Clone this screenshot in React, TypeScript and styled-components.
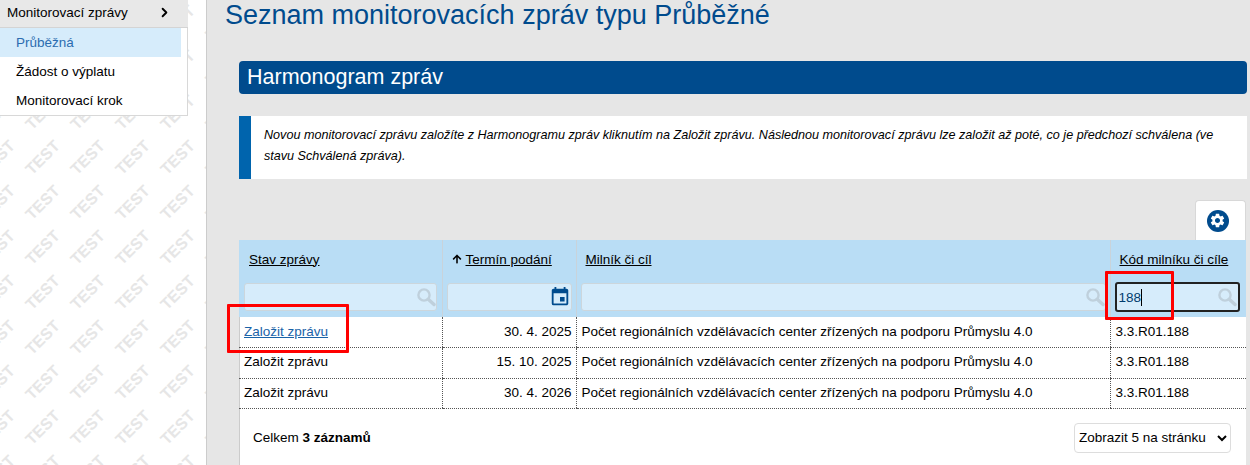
import styled, { createGlobalStyle } from 'styled-components';
import { ChevronRight } from 'lucide-react';
import { FaArrowUp } from 'react-icons/fa';
import { MdEvent, MdSettings } from 'react-icons/md';

const GlobalStyle = createGlobalStyle`
  html, body {
    margin: 0;
    padding: 0;
    height: 465px;
    overflow: hidden;
    background: #e6e6e6;
    font-family: "Liberation Sans", Arial, sans-serif;
    font-size: 13.5px;
    color: #000;
  }
  * { box-sizing: border-box; }
`;

const Page = styled.div`
  display: flex;
  width: 1250px;
  height: 465px;
  overflow: hidden;
`;

const Sidebar = styled.aside`
  position: relative;
  flex: 0 0 207px;
  height: 465px;
  background: #fff;
  border-right: 1px solid #ccc;
  overflow: hidden;
`;

const Watermark = styled.div`
  position: absolute;
  top: 0;
  left: -25px;
  display: grid;
  grid-template-columns: repeat(6, 45px);
  grid-auto-rows: 45px;
`;

const Stamp = styled.span`
  display: flex;
  align-items: center;
  justify-content: center;
  font-size: 16px;
  font-weight: 700;
  color: #e6e6e6;
  transform: rotate(-45deg);
`;

const Menu = styled.nav`
  position: relative;
  width: 188px;
`;

const MenuHead = styled.div`
  display: flex;
  align-items: center;
  justify-content: space-between;
  height: 28px;
  padding: 0 16px 2px 7px;
  background: #e8e8e8;
  border-bottom: 1px solid #d4d4d4;
`;

const MenuList = styled.div`
  background: #fff;
  border-right: 1px solid #d8d8d8;
  border-bottom: 1px solid #d8d8d8;
  height: 88px;
`;

const MenuItem = styled.div<{ $active?: boolean }>`
  display: flex;
  align-items: center;
  width: 181px;
  height: 29px;
  padding-left: 16px;
  background: ${({ $active }) => ($active ? '#d6ecfb' : 'transparent')};
  color: ${({ $active }) => ($active ? '#2b6cb0' : '#000')};
`;

const Main = styled.main`
  flex: 1;
  min-width: 0;
  padding: 0 3px 0 18px;
`;

const Title = styled.h1`
  margin: 0;
  height: 61px;
  font-size: 27px;
  line-height: 30px;
  font-weight: 400;
  color: #004b8d;
`;

const Section = styled.section`
  margin-left: 14px;
`;

const Banner = styled.h2`
  margin: 0;
  height: 33px;
  padding-left: 8px;
  border-radius: 4px;
  background: #004b8d;
  color: #fff;
  font-size: 21.5px;
  line-height: 33px;
  font-weight: 400;
`;

const Note = styled.p`
  margin: 22px 0 0;
  height: 63px;
  padding: 9px 20px 0 13px;
  border-left: 12px solid #0064ad;
  background: #fff;
  font-size: 12.6px;
  line-height: 21px;
  font-style: italic;
`;

const TabRow = styled.div`
  display: flex;
  justify-content: flex-end;
  height: 40px;
  margin: 21px 1px 0 0;
`;

const SettingsTab = styled.div`
  display: flex;
  align-items: center;
  justify-content: center;
  width: 51px;
  height: 40px;
  padding-right: 6px;
  background: #fff;
  border: 1px solid #d8d8d8;
  border-bottom: 0;
  border-radius: 4px 4px 0 0;
`;

const GearBadge = styled.span`
  display: flex;
  align-items: center;
  justify-content: center;
  width: 22px;
  height: 22px;
  border-radius: 50%;
  background: #004b8d;
  color: #fff;
  font-size: 17px;
`;

const TableWrap = styled.div`
  position: relative;
  margin-right: 1px;
  background: #fff;
  box-shadow: inset 1px 0 #ccc;
`;

const Table = styled.table`
  width: 100%;
  table-layout: fixed;
  border-collapse: collapse;
`;

const HeadCell = styled.th`
  height: 40px;
  padding: 0 0 2px 9px;
  background: #b9ddf5;
  border-left: 1px solid #c9d3da;
  text-align: left;
  font-weight: 400;
  font-size: 13.5px;
  vertical-align: middle;

  &:first-child { border-left: 0; padding-left: 10px; }
`;

const SortLink = styled.a`
  color: #000;
  text-decoration: underline;
`;

const SortArrow = styled.span`
  display: inline-block;
  margin-right: 4px;
  font-size: 10px;
`;

const FilterCell = styled.td`
  height: 37px;
  padding: 3px 4px 6px 4px;
  background: #b9ddf5;
  border-left: 1px solid #c9d3da;
  vertical-align: top;

  &:first-child { border-left: 0; padding: 3px 5px 6px 5px; }
`;

const FilterBox = styled.div<{ $focused?: boolean }>`
  display: flex;
  align-items: center;
  justify-content: space-between;
  height: ${({ $focused }) => ($focused ? '30px' : '28px')};
  margin: ${({ $focused }) => ($focused ? '-1px 2px -1px 0' : '0')};
  padding: 0 ${({ $focused }) => ($focused ? '1px' : '0')} 0 2px;
  border: ${({ $focused }) => ($focused ? '2px solid #222' : '1px solid #ccd6dc')};
  border-radius: 3px;
  background: #d6ecfb;
  color: #004b8d;
  font-size: 22px;
`;

const FilterValue = styled.span`
  height: 17px;
  font-size: 13.5px;
  line-height: 17px;
  color: #003c6e;
  border-right: 1px solid #000;
`;

const Spacer = styled.span``;

const Row = styled.tr`
  height: 30.5px;
`;

const Cell = styled.td<{ $align?: string }>`
  padding: 0 4px 2px 5px;
  border-bottom: 1px dotted #555;
  border-left: 1px dotted #555;
  font-size: 13.5px;
  white-space: nowrap;
  overflow: hidden;
  text-align: ${({ $align }) => $align || 'left'};

  &:first-child { border-left: 0; }
`;

const CreateLink = styled.a`
  color: #1a63a8;
  text-decoration: underline;
`;

const TableFooter = styled.div`
  display: flex;
  align-items: center;
  justify-content: space-between;
  height: 58px;
  padding: 0 15px 1px 14px;
`;

const PageSize = styled.select`
  width: 157px;
  height: 30px;
  padding: 0;
  border: 1px solid #ddd;
  border-radius: 4px;
  background: #fff;
  color: #000;
  font-family: inherit;
  font-size: 13.5px;
`;

const Highlight = styled.div<{ $left: number; $top: number; $width: number }>`
  position: absolute;
  left: ${({ $left }) => $left}px;
  top: ${({ $top }) => $top}px;
  width: ${({ $width }) => $width}px;
  height: 49px;
  border: 3px solid #f00;
  border-radius: 1px;
  pointer-events: none;
`;

function SearchIcon() {
  return (
    <svg width="20" height="20" viewBox="0 0 20 20" fill="none" stroke="#bfd0dc" aria-hidden="true">
      <circle cx="8" cy="8" r="5.6" strokeWidth="2.4" />
      <path d="M12.5 12.5 L18 17.5" strokeWidth="3.4" strokeLinecap="round" />
    </svg>
  );
}

const rows = [
  { date: '30. 4. 2025', link: true },
  { date: '15. 10. 2025', link: false },
  { date: '30. 4. 2026', link: false },
];

export default function App() {
  return (
    <>
      <GlobalStyle />
      <Page>
        <Sidebar>
          <Watermark aria-hidden="true">
            {Array.from({ length: 66 }, (_, i) => (
              <Stamp key={i}>TEST</Stamp>
            ))}
          </Watermark>
          <Menu>
            <MenuHead>
              Monitorovací zprávy
              <ChevronRight size={15} strokeWidth={3} />
            </MenuHead>
            <MenuList>
              <MenuItem $active>Průběžná</MenuItem>
              <MenuItem>Žádost o výplatu</MenuItem>
              <MenuItem>Monitorovací krok</MenuItem>
            </MenuList>
          </Menu>
        </Sidebar>
        <Main>
          <Title>Seznam monitorovacích zpráv typu Průběžné</Title>
          <Section>
            <Banner>Harmonogram zpráv</Banner>
            <Note>
              Novou monitorovací zprávu založíte z Harmonogramu zpráv kliknutím na Založit zprávu. Následnou
              monitorovací zprávu lze založit až poté, co je předchozí schválena (ve stavu Schválená zpráva).
            </Note>
            <TabRow>
              <SettingsTab>
                <GearBadge>
                  <MdSettings />
                </GearBadge>
              </SettingsTab>
            </TabRow>
            <TableWrap>
              <Table>
                <colgroup>
                  <col style={{ width: 203 }} />
                  <col style={{ width: 134 }} />
                  <col style={{ width: 534 }} />
                  <col />
                </colgroup>
                <thead>
                  <tr>
                    <HeadCell>
                      <SortLink>Stav zprávy</SortLink>
                    </HeadCell>
                    <HeadCell>
                      <SortArrow>
                        <FaArrowUp />
                      </SortArrow>
                      <SortLink>Termín podání</SortLink>
                    </HeadCell>
                    <HeadCell>
                      <SortLink>Milník či cíl</SortLink>
                    </HeadCell>
                    <HeadCell>
                      <SortLink>Kód milníku či cíle</SortLink>
                    </HeadCell>
                  </tr>
                  <tr>
                    <FilterCell>
                      <FilterBox>
                        <Spacer />
                        <SearchIcon />
                      </FilterBox>
                    </FilterCell>
                    <FilterCell>
                      <FilterBox>
                        <Spacer />
                        <MdEvent />
                      </FilterBox>
                    </FilterCell>
                    <FilterCell>
                      <FilterBox>
                        <Spacer />
                        <SearchIcon />
                      </FilterBox>
                    </FilterCell>
                    <FilterCell>
                      <FilterBox $focused>
                        <FilterValue>188</FilterValue>
                        <SearchIcon />
                      </FilterBox>
                    </FilterCell>
                  </tr>
                </thead>
                <tbody>
                  {rows.map(row => (
                    <Row key={row.date}>
                      <Cell>{row.link ? <CreateLink>Založit zprávu</CreateLink> : 'Založit zprávu'}</Cell>
                      <Cell $align="right">{row.date}</Cell>
                      <Cell>Počet regionálních vzdělávacích center zřízených na podporu Průmyslu 4.0</Cell>
                      <Cell>3.3.R01.188</Cell>
                    </Row>
                  ))}
                </tbody>
              </Table>
              <TableFooter>
                <span>
                  Celkem <b>3 záznamů</b>
                </span>
                <PageSize defaultValue="5">
                  <option value="5">Zobrazit 5 na stránku</option>
                  <option value="10">Zobrazit 10 na stránku</option>
                </PageSize>
              </TableFooter>
              <Highlight $left={-12} $top={64} $width={122} />
              <Highlight $left={866} $top={31} $width={69} />
            </TableWrap>
          </Section>
        </Main>
      </Page>
    </>
  );
}
